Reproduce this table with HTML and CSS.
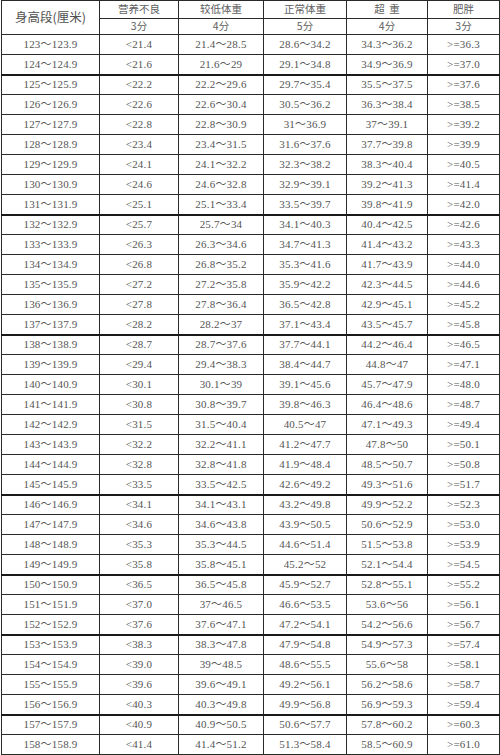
FILE: index.html
```html
<!DOCTYPE html>
<html lang="zh">
<head>
<meta charset="utf-8">
<title>身高体重表</title>
<link rel="stylesheet" href="styles.css">
</head>
<body>
<table class="bmi">
<colgroup>
<col class="c1"><col class="c2"><col class="c3"><col class="c4"><col class="c5"><col class="c6">
</colgroup>
<thead>
<tr class="h1"><th rowspan="2" class="hh">身高段(厘米)</th><th>营养不良</th><th>较低体重</th><th>正常体重</th><th>超&nbsp;&nbsp;重</th><th>肥胖</th></tr>
<tr class="h2"><th>3分</th><th>4分</th><th>5分</th><th>4分</th><th>3分</th></tr>
</thead>
<tbody>
<tr><td>123～123.9</td><td>&lt;21.4</td><td>21.4～28.5</td><td>28.6～34.2</td><td>34.3～36.2</td><td>&gt;=36.3</td></tr>
<tr class="tk"><td>124～124.9</td><td>&lt;21.6</td><td>21.6～29</td><td>29.1～34.8</td><td>34.9～36.9</td><td>&gt;=37.0</td></tr>
<tr><td>125～125.9</td><td>&lt;22.2</td><td>22.2～29.6</td><td>29.7～35.4</td><td>35.5～37.5</td><td>&gt;=37.6</td></tr>
<tr><td>126～126.9</td><td>&lt;22.6</td><td>22.6～30.4</td><td>30.5～36.2</td><td>36.3～38.4</td><td>&gt;=38.5</td></tr>
<tr><td>127～127.9</td><td>&lt;22.8</td><td>22.8～30.9</td><td>31～36.9</td><td>37～39.1</td><td>&gt;=39.2</td></tr>
<tr><td>128～128.9</td><td>&lt;23.4</td><td>23.4～31.5</td><td>31.6～37.6</td><td>37.7～39.8</td><td>&gt;=39.9</td></tr>
<tr><td>129～129.9</td><td>&lt;24.1</td><td>24.1～32.2</td><td>32.3～38.2</td><td>38.3～40.4</td><td>&gt;=40.5</td></tr>
<tr><td>130～130.9</td><td>&lt;24.6</td><td>24.6～32.8</td><td>32.9～39.1</td><td>39.2～41.3</td><td>&gt;=41.4</td></tr>
<tr class="tk"><td>131～131.9</td><td>&lt;25.1</td><td>25.1～33.4</td><td>33.5～39.7</td><td>39.8～41.9</td><td>&gt;=42.0</td></tr>
<tr><td>132～132.9</td><td>&lt;25.7</td><td>25.7～34</td><td>34.1～40.3</td><td>40.4～42.5</td><td>&gt;=42.6</td></tr>
<tr><td>133～133.9</td><td>&lt;26.3</td><td>26.3～34.6</td><td>34.7～41.3</td><td>41.4～43.2</td><td>&gt;=43.3</td></tr>
<tr><td>134～134.9</td><td>&lt;26.8</td><td>26.8～35.2</td><td>35.3～41.6</td><td>41.7～43.9</td><td>&gt;=44.0</td></tr>
<tr><td>135～135.9</td><td>&lt;27.2</td><td>27.2～35.8</td><td>35.9～42.2</td><td>42.3～44.5</td><td>&gt;=44.6</td></tr>
<tr><td>136～136.9</td><td>&lt;27.8</td><td>27.8～36.4</td><td>36.5～42.8</td><td>42.9～45.1</td><td>&gt;=45.2</td></tr>
<tr class="tk"><td>137～137.9</td><td>&lt;28.2</td><td>28.2～37</td><td>37.1～43.4</td><td>43.5～45.7</td><td>&gt;=45.8</td></tr>
<tr><td>138～138.9</td><td>&lt;28.7</td><td>28.7～37.6</td><td>37.7～44.1</td><td>44.2～46.4</td><td>&gt;=46.5</td></tr>
<tr><td>139～139.9</td><td>&lt;29.4</td><td>29.4～38.3</td><td>38.4～44.7</td><td>44.8～47</td><td>&gt;=47.1</td></tr>
<tr><td>140～140.9</td><td>&lt;30.1</td><td>30.1～39</td><td>39.1～45.6</td><td>45.7～47.9</td><td>&gt;=48.0</td></tr>
<tr><td>141～141.9</td><td>&lt;30.8</td><td>30.8～39.7</td><td>39.8～46.3</td><td>46.4～48.6</td><td>&gt;=48.7</td></tr>
<tr><td>142～142.9</td><td>&lt;31.5</td><td>31.5～40.4</td><td>40.5～47</td><td>47.1～49.3</td><td>&gt;=49.4</td></tr>
<tr><td>143～143.9</td><td>&lt;32.2</td><td>32.2～41.1</td><td>41.2～47.7</td><td>47.8～50</td><td>&gt;=50.1</td></tr>
<tr><td>144～144.9</td><td>&lt;32.8</td><td>32.8～41.8</td><td>41.9～48.4</td><td>48.5～50.7</td><td>&gt;=50.8</td></tr>
<tr class="tk"><td>145～145.9</td><td>&lt;33.5</td><td>33.5～42.5</td><td>42.6～49.2</td><td>49.3～51.6</td><td>&gt;=51.7</td></tr>
<tr><td>146～146.9</td><td>&lt;34.1</td><td>34.1～43.1</td><td>43.2～49.8</td><td>49.9～52.2</td><td>&gt;=52.3</td></tr>
<tr><td>147～147.9</td><td>&lt;34.6</td><td>34.6～43.8</td><td>43.9～50.5</td><td>50.6～52.9</td><td>&gt;=53.0</td></tr>
<tr><td>148～148.9</td><td>&lt;35.3</td><td>35.3～44.5</td><td>44.6～51.4</td><td>51.5～53.8</td><td>&gt;=53.9</td></tr>
<tr class="tk"><td>149～149.9</td><td>&lt;35.8</td><td>35.8～45.1</td><td>45.2～52</td><td>52.1～54.4</td><td>&gt;=54.5</td></tr>
<tr><td>150～150.9</td><td>&lt;36.5</td><td>36.5～45.8</td><td>45.9～52.7</td><td>52.8～55.1</td><td>&gt;=55.2</td></tr>
<tr><td>151～151.9</td><td>&lt;37.0</td><td>37～46.5</td><td>46.6～53.5</td><td>53.6～56</td><td>&gt;=56.1</td></tr>
<tr class="tk"><td>152～152.9</td><td>&lt;37.6</td><td>37.6～47.1</td><td>47.2～54.1</td><td>54.2～56.6</td><td>&gt;=56.7</td></tr>
<tr><td>153～153.9</td><td>&lt;38.3</td><td>38.3～47.8</td><td>47.9～54.8</td><td>54.9～57.3</td><td>&gt;=57.4</td></tr>
<tr><td>154～154.9</td><td>&lt;39.0</td><td>39～48.5</td><td>48.6～55.5</td><td>55.6～58</td><td>&gt;=58.1</td></tr>
<tr><td>155～155.9</td><td>&lt;39.6</td><td>39.6～49.1</td><td>49.2～56.1</td><td>56.2～58.6</td><td>&gt;=58.7</td></tr>
<tr class="tk"><td>156～156.9</td><td>&lt;40.3</td><td>40.3～49.8</td><td>49.9～56.8</td><td>56.9～59.3</td><td>&gt;=59.4</td></tr>
<tr><td>157～157.9</td><td>&lt;40.9</td><td>40.9～50.5</td><td>50.6～57.7</td><td>57.8～60.2</td><td>&gt;=60.3</td></tr>
<tr><td>158～158.9</td><td>&lt;41.4</td><td>41.4～51.2</td><td>51.3～58.4</td><td>58.5～60.9</td><td>&gt;=61.0</td></tr>
</tbody>
</table>
</body>
</html>
```
FILE: styles.css
```css
html, body {
  margin: 0;
  padding: 0;
  background: #ffffff;
}

.bmi {
  margin: 0 0 0 1px;
  width: 498px;
  border-collapse: collapse;
  table-layout: fixed;
  font-family: "Liberation Serif", "Noto Sans CJK SC", serif;
  font-size: 11px;
  color: #555555;
}

.c1 { width: 98px; }
.c2 { width: 79px; }
.c3 { width: 85px; }
.c4 { width: 83px; }
.c5 { width: 81px; }
.c6 { width: 72px; }

.bmi th,
.bmi td {
  border: 1px solid #2a2a2a;
  padding: 0;
  text-align: center;
  vertical-align: middle;
  font-weight: normal;
  white-space: nowrap;
  line-height: 1;
}

.bmi td {
  letter-spacing: 0.2px;
}

.bmi .h1 { height: 18px; }
.bmi .h2 { height: 16px; }

.bmi th {
  font-family: "Noto Sans CJK SC", sans-serif;
  font-size: 10.5px;
  color: #606060;
}

.bmi .hh {
  font-size: 12.5px;
  color: #505050;
}

.bmi tbody tr { height: 20px; }

.bmi tbody tr.tk td {
  border-bottom: 2px solid #1a1a1a;
}
```
